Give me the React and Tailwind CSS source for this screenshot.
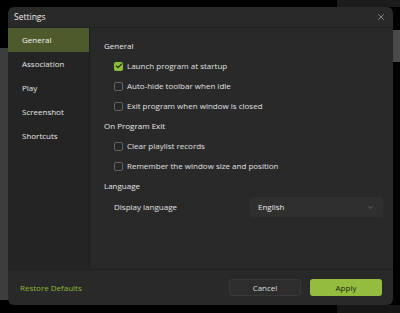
import { Check, X, ChevronDown } from 'lucide-react'

const NAV = ['General', 'Association', 'Play', 'Screenshot', 'Shortcuts']

const SECTIONS = [
  {
    title: 'General',
    options: [
      { label: 'Launch program at startup', checked: true },
      { label: 'Auto-hide toolbar when idle', checked: false },
      { label: 'Exit program when window is closed', checked: false },
    ],
  },
  {
    title: 'On Program Exit',
    options: [
      { label: 'Clear playlist records', checked: false },
      { label: 'Remember the window size and position', checked: false },
    ],
  },
]

function Checkbox({ checked }) {
  return checked ? (
    <span className="flex items-center justify-center w-[9px] h-[9px] rounded-[2px] bg-[#8fbf3a]">
      <Check size={8} strokeWidth={3.5} className="text-[#1c2410]" />
    </span>
  ) : (
    <span className="w-[9px] h-[9px] rounded-[2px] border border-[#626262] bg-[#262626]" />
  )
}

export default function App() {
  return (
    <div
      className="relative w-[400px] h-[313px] bg-black overflow-hidden pl-[8px] pt-[7px] text-[8px] text-[#e4e4e4]"
      style={{ fontFamily: '"Open Sans", "Noto Sans", sans-serif' }}
    >
      {/* background behind the window */}
      <div className="absolute left-0 top-[48px] w-[8px] h-[252px] bg-[#3d3d3d]" />
      <div className="absolute left-[337px] top-0 w-[63px] h-[7px] bg-[#1c1c1c]" />
      <div className="absolute left-[393px] top-[30px] w-[7px] h-[32px] bg-[#4a4a4a]" />
      <div className="absolute left-[337px] top-[305px] w-[63px] h-[8px] bg-[#161616]" />

      <div className="relative w-[385px] h-[298px] rounded-[6px] bg-[#292929] flex flex-col overflow-hidden">
        {/* title bar */}
        <div className="h-[21px] shrink-0 flex items-center justify-between pl-[6px] pr-[7px] border-b border-[#202020]">
          <span className="text-[8.5px] text-[#ececec]">Settings</span>
          <X size={10} strokeWidth={1.5} className="text-[#bdbdbd]" />
        </div>

        {/* body */}
        <div className="flex flex-1 min-h-0">
          <div className="w-[82px] shrink-0 bg-[#242424] border-r border-[#1f1f1f] flex flex-col">
            {NAV.map((item, i) => (
              <div
                key={item}
                className={
                  i === 0
                    ? 'h-[24px] flex items-center pl-[14px] bg-[#4f5a2c] text-[#f4f4f4]'
                    : 'h-[24px] flex items-center pl-[14px] text-[#e6e6e6]'
                }
              >
                {item}
              </div>
            ))}
          </div>

          <div className="flex-1 flex flex-col pt-[8px] pl-[14px] pr-[10px]">
            {SECTIONS.map(section => (
              <div key={section.title} className="flex flex-col">
                <div className="h-[20px] flex items-center text-[#e8e8e8]">{section.title}</div>
                {section.options.map(opt => (
                  <div key={opt.label} className="h-[20px] flex items-center gap-[4px] pl-[10px]">
                    <Checkbox checked={opt.checked} />
                    <span className="text-[#e0e0e0]">{opt.label}</span>
                  </div>
                ))}
              </div>
            ))}
            <div className="h-[20px] flex items-center text-[#e8e8e8]">Language</div>
            <div className="h-[22px] flex items-center justify-between pl-[10px]">
              <span className="text-[#e0e0e0]">Display language</span>
              <div className="w-[133px] h-[20px] rounded-[3px] bg-[#2f2f2f] flex items-center justify-between pl-[8px] pr-[9px]">
                <span className="text-[#ececec]">English</span>
                <ChevronDown size={7} strokeWidth={2} className="text-[#8a8a8a]" />
              </div>
            </div>
          </div>
        </div>

        {/* footer */}
        <div className="h-[36px] shrink-0 border-t border-[#202020] flex items-center justify-between pl-[12px] pr-[11px]">
          <span className="text-[#8fb83a]">Restore Defaults</span>
          <div className="flex gap-[9px]">
            <button className="w-[72px] h-[17px] rounded-[3px] bg-[#2d2d2d] border border-[#393939] text-[#dedede]">
              Cancel
            </button>
            <button className="w-[72px] h-[17px] rounded-[3px] bg-[#94bd3f] text-[#20290f]">
              Apply
            </button>
          </div>
        </div>
      </div>
    </div>
  )
}
